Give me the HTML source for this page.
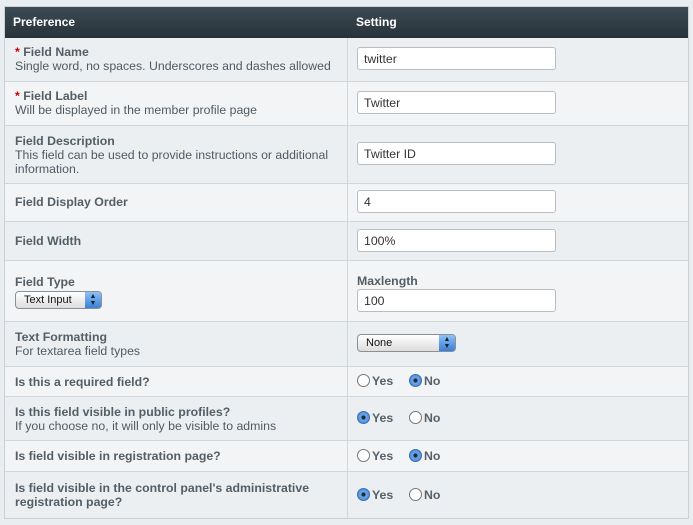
<!DOCTYPE html>
<html><head><style>
body{margin:0;width:693px;height:525px;background:#e9edf0;font-family:"Liberation Sans",sans-serif;position:relative;overflow:hidden}
.t{position:absolute;left:4px;top:6px;width:685px;height:513px;border:1px solid #c9d0d6;box-sizing:border-box}
.h{position:absolute;left:4px;top:6px;width:685px;height:32px;background:linear-gradient(#3f4c55,#27323a);color:#fff;font-weight:bold;font-size:12px}
.h span{position:absolute;top:9px}
.r{position:absolute;left:4px;width:685px;border-bottom:1px solid #cfd6dc;box-sizing:border-box}
.r .l{position:absolute;left:0;top:0;bottom:0;width:343px;border-right:1px solid #cfd6dc}
.a{background:#eceff2}.b{background:#f3f4f5}
.x{position:absolute;left:11px;font-size:12.3px;color:#4f5a63;line-height:14px}
.x b{color:#535e66}
.s{color:#c00}
.in{position:absolute;left:357px;width:199px;height:23px;border:1px solid #b8bec3;border-radius:3px;background:#fff;box-sizing:border-box;font-size:12.3px;color:#333;padding:4px 6px}
.rad{position:absolute;font-size:12.3px;font-weight:bold;color:#56616a}
.o{display:inline-block;width:13px;height:13px;border:1px solid #777;border-radius:50%;background:#fff;vertical-align:-2px;margin-right:2px;box-sizing:border-box;position:relative}
.o.on{background:radial-gradient(#1a2a40 22%,#6fa8e8 32%,#3a7ed0);border-color:#3a6eb0}
.sel{position:absolute;border:1px solid #8a9097;border-radius:4px;background:linear-gradient(#fff,#ddd);font-size:11px;color:#111;box-sizing:border-box;padding:2px 8px}
.sel i{position:absolute;right:0;top:0;bottom:0;width:16px;background:linear-gradient(#8ec0f5,#3b7fd6);border-radius:0 3px 3px 0;color:#123;font-style:normal;font-size:7px;text-align:center;line-height:7px;padding-top:1px}
</style></head><body>
<div class="h"><span style="left:9px">Preference</span><span style="left:352px">Setting</span></div>

<div class="r a" style="top:38px;height:44px"><div class="l"></div><div class="x" style="top:7px"><b><span class="s">*</span> Field Name</b><br>Single word, no spaces. Underscores and dashes allowed</div></div>
<div class="r b" style="top:82px;height:44px"><div class="l"></div><div class="x" style="top:7px"><b><span class="s">*</span> Field Label</b><br>Will be displayed in the member profile page</div></div>
<div class="r a" style="top:126px;height:58px"><div class="l"></div><div class="x" style="top:8px"><b>Field Description</b><br>This field can be used to provide instructions or additional<br>information.</div></div>
<div class="r b" style="top:184px;height:38px"><div class="l"></div><div class="x" style="top:11px"><b>Field Display Order</b></div></div>
<div class="r a" style="top:222px;height:39px"><div class="l"></div><div class="x" style="top:12px"><b>Field Width</b></div></div>
<div class="r b" style="top:261px;height:61px"><div class="l"></div><div class="x" style="top:14px"><b>Field Type</b></div><div class="x" style="left:353px;top:13px"><b>Maxlength</b></div></div>
<div class="r a" style="top:322px;height:45px"><div class="l"></div><div class="x" style="top:8px"><b>Text Formatting</b><br>For textarea field types</div></div>
<div class="r b" style="top:367px;height:30px"><div class="l"></div><div class="x" style="top:8px"><b>Is this a required field?</b></div></div>
<div class="r a" style="top:397px;height:44px"><div class="l"></div><div class="x" style="top:8px"><b>Is this field visible in public profiles?</b><br>If you choose no, it will only be visible to admins</div></div>
<div class="r b" style="top:441px;height:31px"><div class="l"></div><div class="x" style="top:8px"><b>Is field visible in registration page?</b></div></div>
<div class="r a" style="top:472px;height:47px"><div class="l"></div><div class="x" style="top:9px"><b>Is field visible in the control panel's administrative<br>registration page?</b></div></div>

<div class="in" style="top:47px">twitter</div>
<div class="in" style="top:91px">Twitter</div>
<div class="in" style="top:142px">Twitter ID</div>
<div class="in" style="top:190px">4</div>
<div class="in" style="top:229px">100%</div>
<div class="in" style="top:289px">100</div>

<div class="sel" style="left:15px;top:291px;width:87px;height:18px">Text Input<i>▲<br>▼</i></div>
<div class="sel" style="left:357px;top:334px;width:99px;height:18px">None<i>▲<br>▼</i></div>

<div class="rad" style="left:357px;top:374px"><span class="o"></span>Yes</div><div class="rad" style="left:409px;top:374px"><span class="o on"></span>No</div>
<div class="rad" style="left:357px;top:411px"><span class="o on"></span>Yes</div><div class="rad" style="left:409px;top:411px"><span class="o"></span>No</div>
<div class="rad" style="left:357px;top:449px"><span class="o"></span>Yes</div><div class="rad" style="left:409px;top:449px"><span class="o on"></span>No</div>
<div class="rad" style="left:357px;top:488px"><span class="o on"></span>Yes</div><div class="rad" style="left:409px;top:488px"><span class="o"></span>No</div>
<div class="t"></div>
</body></html>
